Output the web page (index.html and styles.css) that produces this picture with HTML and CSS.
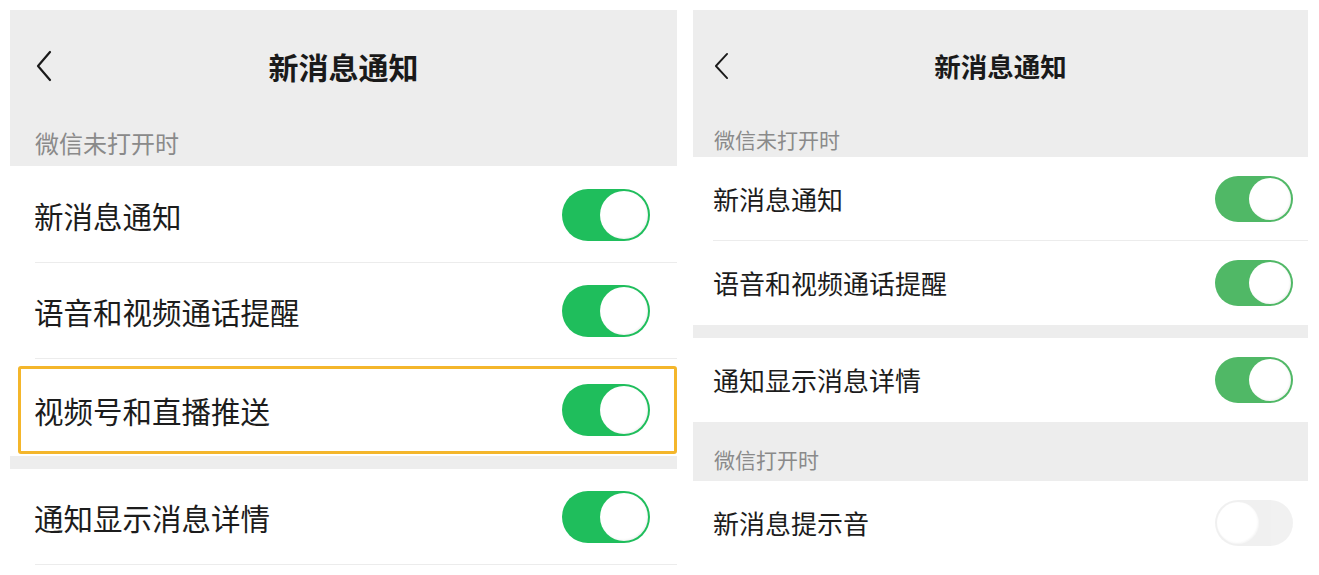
FILE: index.html
```html
<!DOCTYPE html>
<html lang="zh-CN">
<head>
<meta charset="utf-8">
<link rel="stylesheet" href="styles.css">
</head>
<body>
<div class="page">
  <section class="panel panel-a">
    <header class="head">
      <div class="nav">
        <svg class="back" viewBox="0 0 16 32" width="16" height="32"><polyline points="14,2 2,16 14,30" fill="none" stroke="#1a1a1a" stroke-width="2.2" stroke-linecap="round" stroke-linejoin="round"/></svg>
        <h1 class="title">新消息通知</h1>
      </div>
      <div class="label">微信未打开时</div>
    </header>
    <div class="row"><span class="txt">新消息通知</span><span class="tg on"><span class="knob"></span></span></div>
    <div class="row"><span class="txt">语音和视频通话提醒</span><span class="tg on"><span class="knob"></span></span></div>
    <div class="hl-wrap">
      <div class="hl"><span class="txt">视频号和直播推送</span><span class="tg on"><span class="knob"></span></span></div>
    </div>
    <div class="band"></div>
    <div class="row last"><span class="txt">通知显示消息详情</span><span class="tg on"><span class="knob"></span></span></div>
  </section>

  <section class="panel panel-b">
    <header class="head">
      <div class="nav">
        <svg class="back" viewBox="0 0 16 30" width="15" height="28"><polyline points="14,2 2,15 14,28" fill="none" stroke="#1a1a1a" stroke-width="2" stroke-linecap="round" stroke-linejoin="round"/></svg>
        <h1 class="title">新消息通知</h1>
      </div>
      <div class="label">微信未打开时</div>
    </header>
    <div class="row"><span class="txt">新消息通知</span><span class="tg on"><span class="knob"></span></span></div>
    <div class="row nodiv"><span class="txt">语音和视频通话提醒</span><span class="tg on"><span class="knob"></span></span></div>
    <div class="band"></div>
    <div class="row nodiv"><span class="txt">通知显示消息详情</span><span class="tg on"><span class="knob"></span></span></div>
    <div class="section"><span class="label">微信打开时</span></div>
    <div class="row nodiv"><span class="txt">新消息提示音</span><span class="tg off"><span class="knob"></span></span></div>
  </section>
</div>
</body>
</html>
```

FILE: styles.css
```css
* { box-sizing: border-box; margin: 0; padding: 0; }
html, body { background: #ffffff; }
body {
  font-family: "Noto Sans CJK SC", "Noto Sans", sans-serif;
  color: #1c1c1c;
  height: 575px;
  overflow: hidden;
}
.page {
  display: flex;
  gap: 16px;
  padding: 10px 0 0 10px;
}
.panel {
  display: flex;
  flex-direction: column;
  background: #fff;
}
.head { background: #ededed; display: flex; flex-direction: column; }
.nav { position: relative; display: flex; align-items: center; justify-content: center; }
.back { position: absolute; }
.title { font-weight: 700; color: #1a1a1a; }
.label { color: #8a8a8a; }
.row {
  display: flex;
  align-items: center;
  justify-content: space-between;
  position: relative;
}
.row::after {
  content: "";
  position: absolute;
  right: 0;
  bottom: 0;
  height: 1px;
  background: #ececec;
}
.row.nodiv::after { display: none; }
.txt { color: #1c1c1c; }
.band { background: #ededed; }

.tg { display: flex; align-items: center; justify-content: flex-end; border-radius: 999px; }
.tg .knob { background: #fff; border-radius: 50%; display: block; box-shadow: inset -1px -1px 2px rgba(0,0,0,0.06); }

/* ---------- panel A ---------- */
.panel-a { width: 667px; }
.panel-a .head { height: 156px; }
.panel-a .nav { height: 112px; }
.panel-a .back { left: 26px; top: 40px; }
.panel-a .title { font-size: 30px; line-height: 40px; }
.panel-a .label { height: 44px; padding-left: 25px; font-size: 24px; line-height: 42px; }
.panel-a .row { height: 97px; padding: 0 27px 0 24px; }
.panel-a .row::after { left: 25px; }
.panel-a .row:nth-of-type(2) { height: 96px; }
.panel-a .txt { font-size: 29.5px; line-height: 40px; }
.panel-a .tg { width: 88px; height: 52px; background: #1fbe5c; padding: 2px; }
.panel-a .tg .knob { width: 48px; height: 48px; }
.panel-a .hl-wrap { height: 97px; padding: 7px 0 2px 8px; }
.panel-a .hl {
  height: 88px;
  border: 3px solid #f4b62b;
  border-radius: 3px;
  display: flex;
  align-items: center;
  justify-content: space-between;
  padding: 0 24px 0 13px;
}
.panel-a .band { height: 13px; }
.panel-a .row.last { height: 96px; }

/* ---------- panel B ---------- */
.panel-b { width: 615px; }
.panel-b .head { height: 147px; }
.panel-b .nav { height: 112px; }
.panel-b .back { left: 21px; top: 42px; }
.panel-b .title { font-size: 26.5px; line-height: 36px; }
.panel-b .label { height: 35px; padding-left: 21px; font-size: 21px; line-height: 34px; }
.panel-b .row { height: 84px; padding: 0 15px 0 20px; }
.panel-b .row::after { left: 20px; }
.panel-b .row:nth-of-type(3) { height: 86px; }
.panel-b .txt { font-size: 26px; line-height: 36px; }
.panel-b .tg { width: 78px; height: 46px; padding: 2px; }
.panel-b .tg.on { background: #50b866; }
.panel-b .tg .knob { width: 42px; height: 42px; }
.panel-b .band { height: 13px; }
.panel-b .section {
  background: #ededed;
  height: 59px;
  padding: 22px 0 0 0;
}
.panel-b .section .label { display: block; height: auto; line-height: 30px; }
.panel-b .tg.off {
  background: #ececec;
  justify-content: flex-start;
  opacity: 0.75;
}
```
